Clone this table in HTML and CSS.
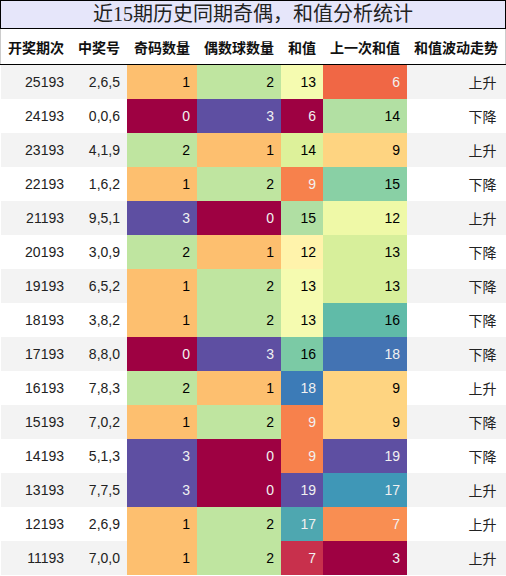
FILE: index.html
```html
<!DOCTYPE html>
<html lang="zh-CN">
<head>
    <meta charset="UTF-8">
    <meta name="viewport" content="width=device-width, initial-scale=1.0">
    <title>近15期历史同期奇偶，和值分析统计</title>
    <link rel="stylesheet" href="styles.css">
</head>
<body>
    <div class="report">
        <div class="report-title">近15期历史同期奇偶，和值分析统计</div>
        <table class="stats">
            <thead>
                <tr>
                    <th>开奖期次</th>
                    <th>中奖号</th>
                    <th>奇码数量</th>
                    <th>偶数球数量</th>
                    <th>和值</th>
                    <th>上一次和值</th>
                    <th>和值波动走势</th>
                </tr>
            </thead>
            <tbody id="statsBody">
                <!-- rows are built from the data below -->
            </tbody>
        </table>
    </div>

    <script>
        const rows = [
            ['25193', '2,6,5', 1, 2, 13, 6, '上升'],
            ['24193', '0,0,6', 0, 3, 6, 14, '下降'],
            ['23193', '4,1,9', 2, 1, 14, 9, '上升'],
            ['22193', '1,6,2', 1, 2, 9, 15, '下降'],
            ['21193', '9,5,1', 3, 0, 15, 12, '上升'],
            ['20193', '3,0,9', 2, 1, 12, 13, '下降'],
            ['19193', '6,5,2', 1, 2, 13, 13, '下降'],
            ['18193', '3,8,2', 1, 2, 13, 16, '下降'],
            ['17193', '8,8,0', 0, 3, 16, 18, '下降'],
            ['16193', '7,8,3', 2, 1, 18, 9, '上升'],
            ['15193', '7,0,2', 1, 2, 9, 9, '下降'],
            ['14193', '5,1,3', 3, 0, 9, 19, '下降'],
            ['13193', '7,7,5', 3, 0, 19, 17, '上升'],
            ['12193', '2,6,9', 1, 2, 17, 7, '上升'],
            ['11193', '7,0,0', 1, 2, 7, 3, '上升']
        ];

        // Spectral colormap, 11 stops
        const spectral = [
            [158, 1, 66], [213, 62, 79], [244, 109, 67], [253, 174, 97],
            [254, 224, 139], [255, 255, 191], [230, 245, 152], [171, 221, 164],
            [102, 194, 165], [50, 136, 189], [94, 79, 162]
        ];

        function colorAt(t) {
            const pos = Math.min(Math.max(t, 0), 1) * 10;
            const i = Math.min(Math.floor(pos), 9);
            const f = pos - i;
            const a = spectral[i], b = spectral[i + 1];
            return a.map((v, k) => Math.round(v + (b[k] - v) * f));
        }

        function luminance(rgb) {
            const lin = rgb.map(c => {
                c = c / 255;
                return c <= 0.03928 ? c / 12.92 : Math.pow((c + 0.055) / 1.055, 2.4);
            });
            return 0.2126 * lin[0] + 0.7152 * lin[1] + 0.0722 * lin[2];
        }

        const gradientCols = [2, 3, 4, 5];
        const ranges = {};
        gradientCols.forEach(c => {
            const vals = rows.map(r => r[c]);
            ranges[c] = [Math.min(...vals), Math.max(...vals)];
        });

        const body = document.getElementById('statsBody');
        rows.forEach(r => {
            const tr = document.createElement('tr');
            r.forEach((value, c) => {
                const td = document.createElement('td');
                td.textContent = value;
                if (ranges[c]) {
                    const [lo, hi] = ranges[c];
                    const rgb = colorAt((value - lo) / (hi - lo));
                    td.style.backgroundColor = `rgb(${rgb.join(',')})`;
                    td.style.color = luminance(rgb) < 0.408 ? '#f1f1f1' : '#000';
                }
                tr.appendChild(td);
            });
            body.appendChild(tr);
        });
    </script>
</body>
</html>
```

FILE: styles.css
```css
body {
    margin: 0;
    background-color: white;
    font-family: "Liberation Sans", "Noto Sans CJK SC", sans-serif;
}

.report {
    width: 506px;
}

.report-title {
    height: 27px;
    line-height: 27px;
    border: 1px solid #000;
    background-color: #e6e6fa;
    text-align: center;
    font-family: "Liberation Serif", "Noto Sans CJK SC", serif;
    font-size: 20px;
    color: #222;
}

.stats {
    width: 100%;
    border-collapse: collapse;
    font-size: 14px;
    color: #222;
}

.stats th {
    height: 35px;
    padding: 0 7px;
    border-bottom: 1px solid #000;
    font-family: "Noto Sans CJK SC", sans-serif;
    font-weight: bold;
    text-align: center;
    white-space: nowrap;
    color: #111;
}

.stats thead tr {
    border-left: 1px solid #ccc;
    border-right: 1px solid #ccc;
}

.stats td {
    height: 34px;
    padding: 0 7px;
    text-align: right;
    white-space: nowrap;
}

.stats td:last-child {
    padding-right: 9px;
}

.stats tbody tr:nth-child(odd) {
    background-color: #f3f3f3;
}
```
